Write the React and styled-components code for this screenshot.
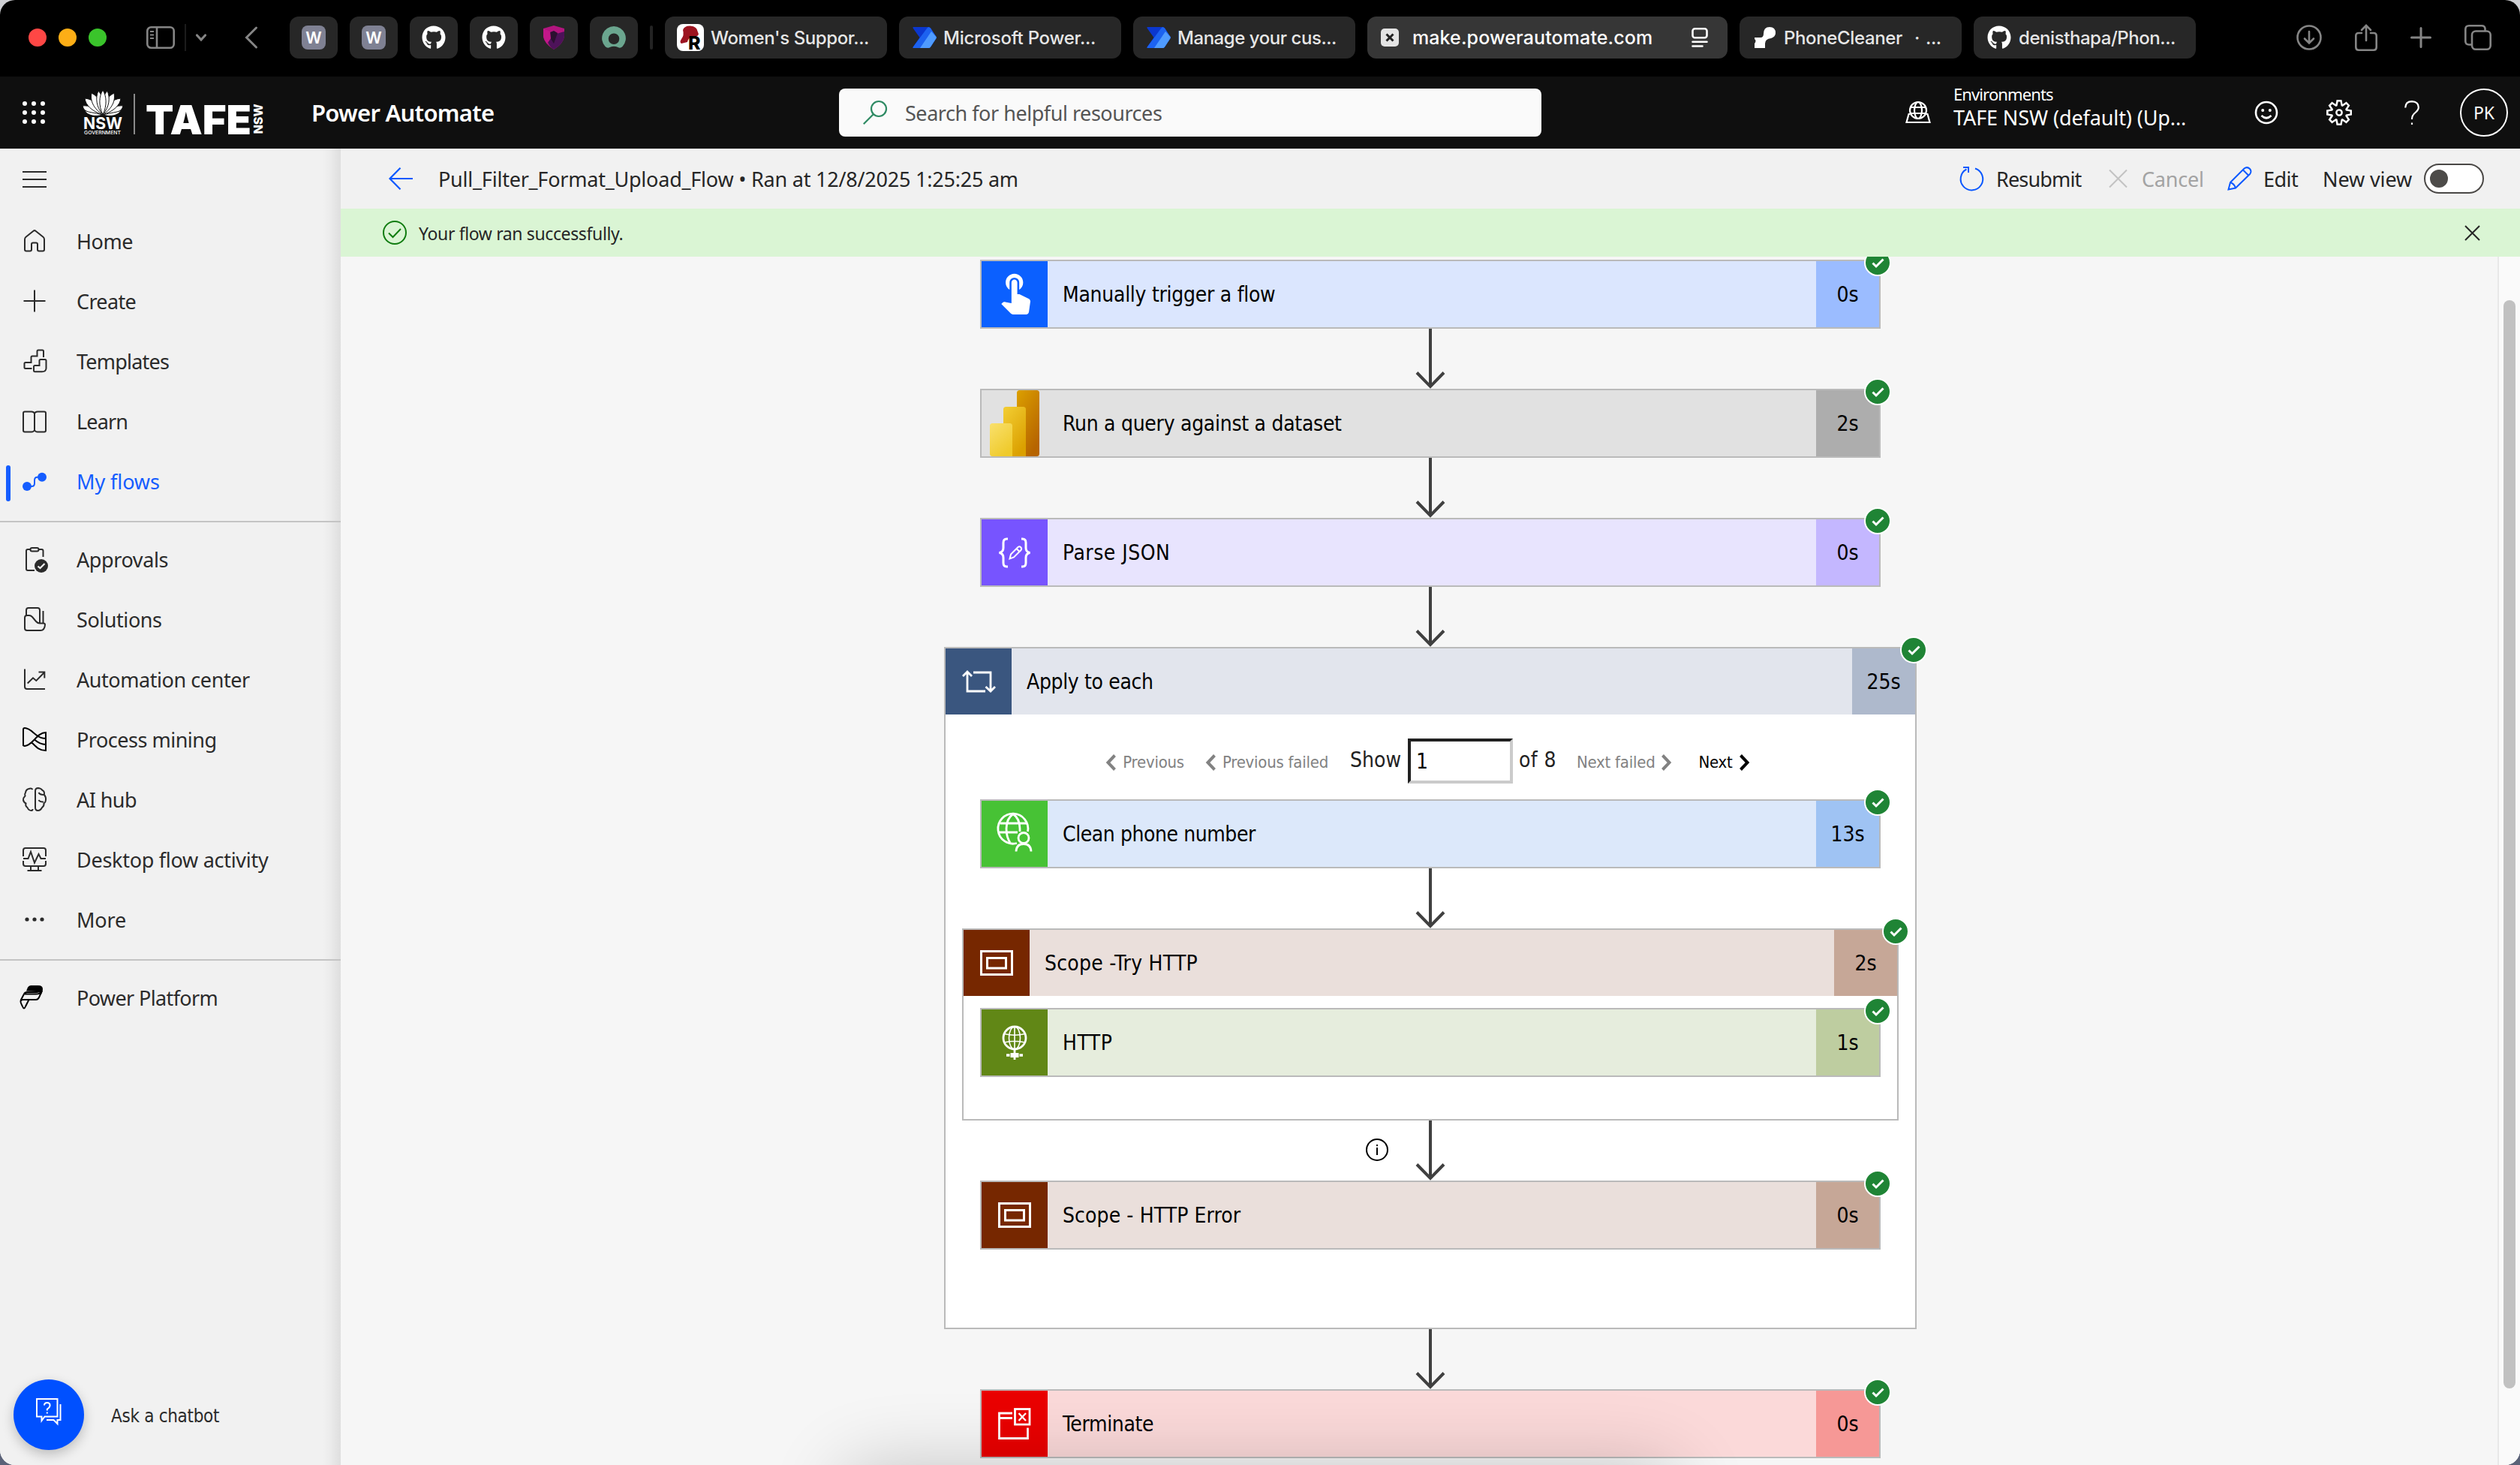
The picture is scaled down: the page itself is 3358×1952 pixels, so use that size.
import React from "react";
import styled, { createGlobalStyle, css } from "styled-components";
import { FaGithub } from "react-icons/fa";
import { MdTouchApp } from "react-icons/md";
import { VscSettingsGear } from "react-icons/vsc";

const UI = `"Noto Sans", "Open Sans", sans-serif`;
const TAHOMA = `"DejaVu Sans Condensed", "DejaVu Sans", sans-serif`;
const CHROME = `Inter, "Noto Sans", sans-serif`;

const GlobalStyle = createGlobalStyle`
  * { box-sizing: border-box; }
  body {
    margin: 0;
    background: linear-gradient(#cfd0d4 0 50%, #5b6278 50% 100%);
    font-family: ${UI};
  }
  svg { display: block; flex: none; }
`;

const Window = styled.div`
  position: relative;
  display: flex;
  flex-direction: column;
  width: 3358px;
  height: 1952px;
  overflow: hidden;
  border-radius: 20px;
  background: #f6f6f6;
`;

/* ---------- browser chrome ---------- */

const ChromeBar = styled.div`
  display: flex;
  align-items: center;
  height: 102px;
  padding: 0 38px 2px 38px;
  background: #000;
  font-family: ${CHROME};
`;

const Lights = styled.div`
  display: flex;
  gap: 16px;
`;

const Light = styled.span`
  width: 24px;
  height: 24px;
  border-radius: 50%;
  background: ${(p) => p.$color};
`;

const ChromeTools = styled.div`
  display: flex;
  align-items: center;
  margin-left: 53px;
  color: #858585;
`;

const ToolDivider = styled.span`
  width: 2px;
  height: 36px;
  margin: 0 12px 0 13px;
  background: #1c1c1c;
`;

const BackSlot = styled.span`
  margin-left: 50px;
`;

const Tabs = styled.div`
  display: flex;
  align-items: center;
  gap: 16px;
  margin-left: 42px;
`;

const PinnedTab = styled.div`
  display: flex;
  align-items: center;
  justify-content: center;
  width: 64px;
  height: 56px;
  border-radius: 12px;
  background: #272727;
  color: #fff;
`;

const TabsDivider = styled.span`
  width: 4px;
  height: 32px;
  border-radius: 2px;
  background: #232323;
`;

const Tab = styled.div`
  display: flex;
  align-items: center;
  gap: ${(p) => p.$gap || 9}px;
  width: ${(p) => (p.$active ? 480 : 296)}px;
  height: 56px;
  padding: 0 ${(p) => (p.$active ? 26 : 12)}px 0 ${(p) => p.$pad || 18}px;
  border-radius: 12px;
  background: ${(p) => (p.$active ? "#363636" : "#272727")};
  color: #fff;
`;

const TabTitle = styled.span`
  flex: 1;
  font-size: ${(p) => (p.$active ? 25 : 24)}px;
  font-weight: 500;
  letter-spacing: ${(p) => p.$ls}px;
  word-spacing: ${(p) => p.$ws || 0}px;
  white-space: pre;
  color: ${(p) => (p.$active ? "#fff" : "#e6e6e6")};
`;

const LetterBadge = styled.span`
  display: flex;
  align-items: center;
  justify-content: center;
  width: 32px;
  height: 32px;
  border-radius: 8px;
  background: #7f8193;
  color: #fff;
  font-size: 21px;
  font-weight: 600;
`;

const ChromeActions = styled.div`
  display: flex;
  align-items: center;
  gap: 44px;
  margin-left: auto;
  color: #858585;
`;

/* ---------- app header ---------- */

const Header = styled.header`
  display: flex;
  align-items: center;
  height: 96px;
  background: #0f0f0f;
  color: #fff;
`;

const HeaderLeft = styled.div`
  display: flex;
  align-items: center;
  width: 1118px;
  padding-left: 30px;
`;

const Brand = styled.div`
  margin-left: 50px;
`;

const AppName = styled.span`
  margin-left: 65px;
  font-size: 31px;
  font-weight: 600;
  letter-spacing: -0.75px;
  white-space: nowrap;
`;

const SearchBox = styled.div`
  display: flex;
  align-items: center;
  gap: 24px;
  width: 936px;
  height: 64px;
  padding-left: 32px;
  border-radius: 8px;
  background: #fafafa;
  color: #2e8a63;
`;

const SearchText = styled.span`
  font-size: 27px;
  letter-spacing: -0.46px;
  color: #555;
`;

const HeaderRight = styled.div`
  display: flex;
  align-items: center;
  flex: 1;
  justify-content: flex-end;
  padding-right: 16px;
`;

const EnvText = styled.div`
  display: flex;
  flex-direction: column;
  align-self: flex-start;
  width: 401px;
  margin: -8px 0 0 30px;
  white-space: nowrap;
`;

const EnvLabel = styled.span`
  font-size: 22px;
  line-height: 31px;
  letter-spacing: -0.89px;
`;

const EnvName = styled.span`
  font-size: 27px;
  line-height: 32px;
  letter-spacing: -0.11px;
`;

const HeaderIcons = styled.div`
  display: flex;
  align-items: center;
  gap: 64px;
`;

const HelpMark = styled.span`
  width: 32px;
  display: flex;
  justify-content: center;
`;

const Avatar = styled.div`
  display: flex;
  align-items: center;
  justify-content: center;
  width: 64px;
  height: 64px;
  margin-left: 48px;
  border: 2px solid #fff;
  border-radius: 50%;
  font-size: 23px;
`;

/* ---------- sidebar ---------- */

const Body = styled.div`
  display: flex;
  flex: 1;
  min-height: 0;
`;

const Sidebar = styled.nav`
  display: flex;
  flex-direction: column;
  flex: none;
  width: 454px;
  background: linear-gradient(90deg, rgba(0, 0, 0, 0) 430px, rgba(0, 0, 0, 0.025) 440px, rgba(0, 0, 0, 0.08) 454px), #f1f1f1;
  color: #2b2b2b;
`;

const MenuButton = styled.div`
  height: 83px;
  padding: 30px 0 0 30px;
`;

const NavItem = styled.div`
  position: relative;
  display: flex;
  align-items: center;
  gap: 40px;
  height: 80px;
  padding-left: 30px;
  color: ${(p) => (p.$selected ? "#155dff" : "inherit")};

  ${(p) =>
    p.$selected &&
    css`
      &::before {
        content: "";
        position: absolute;
        left: 8px;
        top: 19px;
        width: 6px;
        height: 48px;
        border-radius: 3px;
        background: #155dff;
      }
    `}
`;

const NavLabel = styled.span`
  font-size: 27px;
  letter-spacing: ${(p) => p.$ls}px;
  white-space: nowrap;
`;

const NavDivider = styled.hr`
  width: 100%;
  height: 2px;
  margin: 13px 0 9px;
  border: 0;
  background: #c4c4c4;
`;

const Chatbot = styled.div`
  display: flex;
  align-items: center;
  gap: 36px;
  margin-top: auto;
  padding: 0 0 20px 18px;
`;

const ChatButton = styled.div`
  display: flex;
  justify-content: center;
  width: 94px;
  height: 94px;
  padding-top: 25px;
  border-radius: 50%;
  background: #0050ff;
  box-shadow: 0 6px 16px rgba(0, 0, 0, 0.22);
`;

const ChatLabel = styled.span`
  padding-top: 3px;
  font-family: ${TAHOMA};
  font-size: 24px;
  letter-spacing: -0.3px;
`;

/* ---------- main column ---------- */

const Main = styled.main`
  display: flex;
  flex-direction: column;
  flex: 1;
  min-width: 0;
`;

const Toolbar = styled.div`
  display: flex;
  align-items: center;
  height: 80px;
  padding: 0 48px 0 64px;
  background: #f1f1f1;
  color: #262626;
  font-size: 27px;
`;

const RunTitle = styled.span`
  flex: 1;
  margin-left: 34px;
  letter-spacing: -0.22px;
  white-space: nowrap;
`;

const Command = styled.div`
  display: flex;
  align-items: center;
  gap: ${(p) => p.$gap}px;
  width: ${(p) => p.$width}px;
  letter-spacing: ${(p) => p.$ls}px;
  color: ${(p) => (p.$disabled ? "#a3a3a3" : "inherit")};
  white-space: nowrap;

  svg { color: ${(p) => (p.$disabled ? "#c2c2c2" : "#0a58ff")}; }
`;

const Toggle = styled.span`
  display: flex;
  align-items: center;
  width: 80px;
  height: 40px;
  padding-left: 6px;
  border: 2px solid #4a4846;
  border-radius: 20px;
  background: #fff;

  &::before {
    content: "";
    width: 24px;
    height: 24px;
    border-radius: 50%;
    background: #4d4b49;
  }
`;

const SuccessBar = styled.div`
  display: flex;
  align-items: center;
  height: 64px;
  padding: 0 53px 0 56px;
  background: #daf5d4;
  color: #262626;
`;

const SuccessText = styled.span`
  flex: 1;
  margin-left: 16px;
  padding-top: 2px;
  font-size: 23px;
  letter-spacing: -0.37px;
`;

const Canvas = styled.div`
  position: relative;
  display: flex;
  flex-direction: column;
  align-items: center;
  flex: 1;
  min-height: 0;
  padding-top: 4px;
  overflow: hidden;
  background: #f6f6f6;
  font-family: ${TAHOMA};
`;

const ScrollTrack = styled.div`
  position: absolute;
  top: 0;
  right: 0;
  bottom: 0;
  width: 30px;
  padding: 58px 0 0 6px;
  border-left: 2px solid #e8e8e8;
  background: #fafafa;
`;

const ScrollThumb = styled.div`
  width: 16px;
  height: 1450px;
  border-radius: 8px;
  background: #c1c1c1;
`;

const DockShadow = styled.div`
  position: absolute;
  left: 1130px;
  top: 1962px;
  width: 1098px;
  height: 120px;
  border-radius: 30px;
  box-shadow: 0 0 100px 8px rgba(0, 0, 0, 0.2);
`;

/* ---------- flow cards ---------- */

const Card = styled.section`
  position: relative;
  display: flex;
  flex: none;
  width: 1200px;
  height: 92px;
  border: 2px solid #bababa;
  background: ${(p) => p.$bg};
`;

const Container = styled.section`
  position: relative;
  display: flex;
  flex-direction: column;
  align-items: center;
  flex: none;
  width: ${(p) => p.$width}px;
  padding-bottom: ${(p) => p.$bottom}px;
  border: 2px solid #bababa;
  background: #fff;
`;

const ContainerHeader = styled.div`
  display: flex;
  align-self: stretch;
  height: 88px;
  margin-bottom: ${(p) => p.$after || 0}px;
  background: ${(p) => p.$bg};
`;

const CardIcon = styled.div`
  flex: none;
  width: 88px;
  height: 88px;
  background: ${(p) => p.$color};
`;

const CardTitle = styled.div`
  display: flex;
  align-items: center;
  flex: 1;
  padding-left: 20px;
  color: #000;
  font-size: 28px;
  letter-spacing: ${(p) => p.$ls}px;
  white-space: nowrap;
`;

const Duration = styled.div`
  display: flex;
  align-items: center;
  justify-content: center;
  width: 84px;
  background: ${(p) => p.$color};
  color: #000;
  font-size: 28px;
`;

const StatusBadge = styled.span`
  position: absolute;
  top: -16px;
  right: -16px;
  width: 36px;
  height: 36px;
  border: 2px solid #fff;
  border-radius: 50%;
  background: #1f8435;
`;

const ArrowSlot = styled.div`
  position: relative;
  display: flex;
  justify-content: center;
  flex: none;
  width: 40px;
  height: 80px;
`;

const InfoMark = styled.span`
  position: absolute;
  left: -66px;
  top: 24px;
`;

/* ---------- pager ---------- */

const Pager = styled.div`
  display: flex;
  align-items: center;
  align-self: stretch;
  height: 113px;
  padding-bottom: 11px;
  padding-top: 22px;
`;

const PagerLeft = styled.div`
  display: flex;
  align-items: center;
  justify-content: flex-end;
  width: 616px;
  padding-right: 9px;
`;

const PagerLink = styled.span`
  display: flex;
  align-items: center;
  gap: 9px;
  margin-left: ${(p) => p.$ml || 0}px;
  margin-right: ${(p) => p.$mr || 0}px;
  padding-top: 3px;
  font-size: 22px;
  letter-spacing: -0.24px;
  white-space: nowrap;
  color: ${(p) => (p.$on ? "#000" : "#828282")};
`;

const PagerText = styled.span`
  padding-bottom: 3px;
  font-size: 28px;
  letter-spacing: ${(p) => p.$ls || 0}px;
  color: #222;
`;

const PagerInput = styled.div`
  display: flex;
  align-items: center;
  width: 140px;
  height: 60px;
  padding-left: 7px;
  border: 4px solid;
  border-color: #212121 #cbcbcb #cbcbcb #212121;
  background: #fff;
  font-size: 28px;
  color: #000;
`;

const PagerRight = styled.div`
  display: flex;
  align-items: center;
  padding-left: 8px;
`;

/* ---------- drawings ---------- */

const Stroke = ({ w = 32, h = 32, sw = 2, children, ...rest }) => (
  <svg width={w} height={h} viewBox={`0 0 ${w} ${h}`} fill="none" stroke="currentColor" strokeWidth={sw} overflow="visible" {...rest}>
    {children}
  </svg>
);

const GovLogo = () => (
  <svg width="240" height="60" viewBox="0 0 240 60" fill="#fff" overflow="visible">
    <g stroke="#0f0f0f" strokeWidth="1">
      <path d="M27 34 C12 34 2 30 0 21 C8 20 20 24 27 34Z" />
      <path d="M27 34 C42 34 52 30 54 21 C46 20 34 24 27 34Z" />
      <path d="M27 33 C12 28 4 20 3 11 C14 12 24 20 27 33Z" />
      <path d="M27 33 C42 28 50 20 51 11 C40 12 30 20 27 33Z" />
      <path d="M27 33 C14 24 10 14 12 4 C22 9 28 20 27 33Z" />
      <path d="M27 33 C40 24 44 14 42 4 C32 9 26 20 27 33Z" />
      <path d="M27 33 C18 22 17 10 21 1 C28 9 30 20 27 33Z" />
      <path d="M27 33 C36 22 37 10 33 1 C26 9 24 20 27 33Z" />
      <path d="M27 33 C21 20 22 8 27 0 C32 8 33 20 27 33Z" />
      <path d="M27 33 C16 30 8 30 3 27 C6 34 16 36 27 33 C38 36 48 34 51 27 C46 30 38 30 27 33Z" />
    </g>
    <text x="1" y="51.500" fontFamily="Inter, sans-serif" fontWeight="700" fontSize="21" textLength="52" lengthAdjust="spacingAndGlyphs">NSW</text>
    <text x="2" y="58.500" fontFamily="Inter, sans-serif" fontWeight="500" fontSize="6.500" textLength="49" lengthAdjust="spacingAndGlyphs">GOVERNMENT</text>
    <rect x="68" y="5" width="2" height="54" fill="#8a8a8a" />
    <text x="84" y="58.500" fontFamily="Inter, sans-serif" fontWeight="900" fontSize="54" textLength="141" lengthAdjust="spacingAndGlyphs">TAFE</text>
    <text transform="translate(239.500 58.500) rotate(-90)" fontFamily="Inter, sans-serif" fontWeight="800" fontSize="16.500" textLength="40" lengthAdjust="spacingAndGlyphs">NSW</text>
  </svg>
);

const Waffle = () => (
  <svg width="30" height="30" fill="#fff">
    {[3, 15, 27].map((y) => [3, 15, 27].map((x) => <circle key={`${x}-${y}`} cx={x} cy={y} r="3" />))}
  </svg>
);

const PowerAutomateMark = () => (
  <svg width="32" height="28" viewBox="0 0 32 28">
    <path d="M1 0 H21 Q23 0 24 1.500 L31.500 13 Q32 14 31.500 15 L24 26.500 Q23 28 21 28 H1 Q0 28 .8 26.500 L9.500 14 L.6 1.500 Q0 0 1 0Z" fill="#0b37cf" />
    <path d="M21 0 Q23 0 24 1.500 L31.500 13 Q32 14 31.500 15 L24 26.500 Q23 28 21 28 H1 Q0 28 .8 26.500 L19 2Z" fill="#1c62f0" />
    <path d="M31.500 13 Q32 14 31.500 15 L24 26.500 Q23 28 21 28 H10 L25 6Z" fill="#4f9bff" />
  </svg>
);

const GITHUB = <FaGithub size={32} />;

const Shield = () => (
  <svg width="28" height="32" viewBox="0 0 28 32">
    <path d="M14 0 L28 4 V14 Q27 24 14 32 Q1 24 0 14 V4Z" fill="#b3157f" />
    <path d="M14 12 L28 8 V14 Q27 24 14 32 Q8 28 6 22Z" fill="#4d1259" />
    <path d="M14 7 L19 10 L14 24 L8 15 L9 9Z" fill="#2b1030" />
    <path d="M9 8 L0 4 V14 Q.5 19 5 24 L10 17Z" fill="#c2188a" />
  </svg>
);

const Ring = () => (
  <svg width="32" height="30" viewBox="0 0 32 30">
    <path d="M16 0 A16 16 0 0 0 4.500 27 Q7.500 30 10.500 28 Q16 25.500 21.500 28 Q24.500 30 27.500 27 A16 16 0 0 0 16 0Z M16 9.500 A7.200 7.200 0 1 1 16 24 A7.200 7.200 0 1 1 16 9.500Z" fill="#6ba68f" fillRule="evenodd" />
  </svg>
);

const RoundedPortrait = () => (
  <svg width="36" height="36" viewBox="0 0 36 36" overflow="visible">
    <rect width="36" height="36" rx="8" fill="#fff" />
    <path d="M8 8 Q10 2 18 2.500 Q27 3 28 11 Q30 14 27 16 L20 16 Q15 19 14 24 L6 26 Q3 24 6 20 Q10 15 8 8Z" fill="#9c1420" />
    <text x="15" y="34" fontFamily="Inter, sans-serif" fontWeight="800" fontSize="25" fill="#000">R</text>
  </svg>
);

const PhoneMark = () => (
  <svg width="28" height="28" viewBox="0 0 28 28" fill="#fff">
    <path d="M0 14 H8 Q12 14 12 9 Q12 0 20 0 Q28 0 28 8 Q28 13 22 15 Q14 16 14 22 V28 H0 V22Q3 18 0 16Z" />
  </svg>
);

const SoloX = () => (
  <svg width="24" height="24" viewBox="0 0 24 24">
    <rect width="24" height="24" rx="5" fill="#e4e4e4" />
    <path d="M7.500 7.500 L16.500 16.500 M16.500 7.500 L7.500 16.500" stroke="#222" strokeWidth="3" />
  </svg>
);

const Check = () => (
  <svg width="32" height="32" viewBox="0 0 32 32" fill="none" stroke="#fff" strokeWidth="3">
    <path d="M9.500 16.500 L14 21 L23.500 11.500" />
  </svg>
);

const Arrow = () => (
  <svg width="40" height="80" viewBox="0 0 40 80" fill="none" stroke="#404040" strokeWidth="4">
    <path d="M20 0 V77" />
    <path d="M2 58.500 L20 77 L38 58.500" />
  </svg>
);

const Info = () => (
  <svg width="30" height="30" viewBox="0 0 30 30">
    <circle cx="15" cy="15" r="14" fill="none" stroke="#000" strokeWidth="2" />
    <rect x="14" y="12" width="2" height="10" />
    <rect x="14" y="8" width="2" height="2.200" />
  </svg>
);

const Chevron = ({ right }) => (
  <Stroke w={13} h={22} sw={4}>
    <path d={right ? "M1.500 1.500 L10.500 11 L1.500 20.500" : "M11.500 1.500 L2.500 11 L11.500 20.500"} />
  </Stroke>
);

const navIcons = {
  home: (
    <path d="M3 14 Q3 12 4.500 10.800 L14.500 2.800 Q16 1.500 17.500 2.800 L27.500 10.800 Q29 12 29 14 V27.500 Q29 29.500 27 29.500 H22 Q20 29.500 20 27.500 V20.500 Q20 18.500 18 18.500 H14 Q12 18.500 12 20.500 V27.500 Q12 29.500 10 29.500 H5 Q3 29.500 3 27.500Z" />
  ),
  create: <path d="M16 1.500 V30.500 M1.500 16 H30.500" />,
  templates: (
    <>
      <path d="M28 11 V3 Q28 1.500 26.500 1.500 H21 Q19.500 1.500 19.500 3 V9.500 H13 Q11.500 9.500 11.500 11 V18 H4 Q2.500 18 2.500 19.500 V24.500 Q2.500 26 4 26 H12.500" />
      <path d="M24 14 H30 Q31.500 14 31.500 15.500 V26 Q31 30.300 26 30.300 H16.500 Q15 30.300 15 29 V23.500 Q15 22 16.500 22 H22.500 V15.500 Q22.500 14 24 14Z" />
    </>
  ),
  learn: (
    <path d="M16 6 Q15 3.500 12 3.500 H3 Q1 3.500 1 5.500 V28.500 Q1 30.500 3 30.500 H12 Q15 30.500 16 28 Q17 30.500 20 30.500 H29 Q31 30.500 31 28.500 V5.500 Q31 3.500 29 3.500 H20 Q17 3.500 16 6 V28" />
  ),
  flows: (
    <>
      <circle cx="6" cy="23" r="6" fill="currentColor" stroke="none" />
      <circle cx="26" cy="10.700" r="6" fill="currentColor" stroke="none" />
      <path d="M8 23 H12.500 Q16 23 16 19 V15 Q16 10.700 20 10.700 H23" />
    </>
  ),
  approvals: (
    <>
      <path d="M10 3 H7 Q5 3 5 5 V29 Q5 31 7 31 H16 M22 3 H25.500 Q27.500 3 27.500 5 V13" />
      <rect x="10.500" y="1" width="11" height="4.500" rx="2.200" />
      <circle cx="25" cy="25" r="9" fill="currentColor" stroke="none" />
      <path d="M20.500 25.500 L23.500 28 L29.500 22" stroke="#f1f1f1" strokeWidth="2.200" />
    </>
  ),
  solutions: (
    <>
      <path d="M5 11 V4 Q5 1 8 1 H20 Q23 1 23 4 V21 M27.500 5 V21" />
      <path d="M3 14 Q3 11 6 11 H9 Q11 11 13 13 L18 19 Q20 21.500 23 21.500 H28 Q30 21.500 30 23.500 Q29.500 31 24 31 H6 Q3 31 3 28Z" />
    </>
  ),
  automation: (
    <>
      <path d="M3 2.500 V26 Q3 29 6 29 H30" />
      <path d="M6.700 21.500 L14 14.300 L18.300 17.900 L29 7 M21.500 6.500 H29.300 V14.500" />
    </>
  ),
  mining: (
    <g stroke="#000">
      <path d="M1 25 V3 Q1 1 3 1 C12 1 17 13 27 14.500 L31 15 M1 23 Q1 25 3 25 C14 24 19 7 31 7 V31 C22 31 18 26 12.500 20.500" />
      <path d="M16 16.500 C20 20 25 23 31 23" />
    </g>
  ),
  hub: (
    <>
      <path d="M13.500 3 Q12 .8 8.500 2 Q4.500 3 4 7 Q2.500 9 3.500 11.500 Q.8 14 1 17 Q1.500 20 4.500 21.500 Q3.500 25 6.500 27 Q8 31 12 31 Q13.500 31 13.500 29" />
      <path d="M17 5 Q17 1 21 1 Q25 1.500 26.500 4 Q29.500 5 29 10 Q31.500 13 31 17 Q31 19.500 28.500 21.500 Q29 25 26 27 Q24 31 20.500 31 Q17 31 17 27Z M21.500 7 Q23 10 28 10 M21.500 17 Q23 19.500 28 19.500" />
    </>
  ),
  desktop: (
    <>
      <path d="M1 12 V4 Q1 1 4 1 H28 Q31 1 31 4 V12 M1 18 V22 Q1 25 4 25 H28 Q31 25 31 22 V18 M11 25 V31 M21 25 V31 M6.500 31 H25.500" />
      <path d="M1 15 H7.500 L11 6 L16 20.500 L21.500 9 L24.500 15 H31" />
    </>
  ),
  more: (
    <g fill="currentColor" stroke="none">
      <circle cx="6" cy="16" r="2.600" />
      <circle cx="16" cy="16" r="2.600" />
      <circle cx="26" cy="16" r="2.600" />
    </g>
  ),
  platform: (
    <g stroke="#000">
      <path d="M5 7.500 L7 2.500 Q8.500 0 11 0 H21 Q27 0 27 5 Q27 8 25 12 Q24 8 19 8Z" fill="#000" stroke="none" />
      <path d="M-2.500 20 L2 11.500 Q3 9 6 9 H19 Q25 8 26 7 L22 16 Q20.500 19 18 19 H1 Q-2 19 -2.500 21 Q-3 22 0 28 Q2 33 4 28 L8.500 19 M3 11.500 H18 Q23 11.500 25 9" />
    </g>
  ),
};

const primaryNav = [
  ["home", "Home", -0.43],
  ["create", "Create", -0.66],
  ["templates", "Templates", -0.8],
  ["learn", "Learn", -0.85],
  ["flows", "My flows", -0.08],
];
const secondaryNav = [
  ["approvals", "Approvals", -0.4],
  ["solutions", "Solutions", -0.44],
  ["automation", "Automation center", -0.44],
  ["mining", "Process mining", -0.49],
  ["hub", "AI hub", -0.56],
  ["desktop", "Desktop flow activity", -0.28],
  ["more", "More", -0.14],
];
const platformNav = [["platform", "Power Platform", -0.63]];

const NavList = ({ items }) =>
  items.map(([icon, label, ls]) => (
    <NavItem key={label} $selected={icon === "flows"}>
      <Stroke>{navIcons[icon]}</Stroke>
      <NavLabel $ls={ls}>{label}</NavLabel>
    </NavItem>
  ));

const Glyph = ({ children, sw = 2.8 }) => (
  <svg width="88" height="88" viewBox="0 0 88 88" fill="none" stroke="#fff" strokeWidth={sw}>
    {children}
  </svg>
);

const TouchGlyph = styled(MdTouchApp)`
  width: 62px;
  height: 62px;
  margin: 9px 0 0 14px;
  fill: #fff;
`;

const glyphs = {
  touch: <TouchGlyph />,
  powerbi: (
    <svg width="88" height="88" viewBox="0 0 88 88">
      <defs>
        <linearGradient id="bar3" x1="0" y1="0" x2=".6" y2="1">
          <stop offset="0" stopColor="#dca000" />
          <stop offset="1" stopColor="#b66400" />
        </linearGradient>
        <linearGradient id="bar2" x1="0" y1="0" x2=".6" y2="1">
          <stop offset="0" stopColor="#f3ce34" />
          <stop offset="1" stopColor="#dba000" />
        </linearGradient>
        <linearGradient id="bar1" x1="0" y1="0" x2=".6" y2="1">
          <stop offset="0" stopColor="#f9e06c" />
          <stop offset="1" stopColor="#efca2b" />
        </linearGradient>
      </defs>
      <rect x="47" y="0" width="30" height="88" rx="3.500" fill="url(#bar3)" />
      <path d="M29 25.500 Q29 22 32.500 22 H55.500 Q59 22 59 25.500 V88 H29Z" fill="url(#bar2)" />
      <path d="M11 47.500 Q11 44 14.500 44 H37.500 Q41 44 41 47.500 V88 H14.500 Q11 88 11 84.500Z" fill="url(#bar1)" />
    </svg>
  ),
  json: (
    <Glyph sw={3}>
      <path d="M35 26 H33.500 Q29 26 29 31 V38 Q29 43.500 23.500 44.500 Q29 45.500 29 51 V58 Q29 63 33.500 63 H35" />
      <path d="M53 26 H54.500 Q59 26 59 31 V38 Q59 43.500 64.500 44.500 Q59 45.500 59 51 V58 Q59 63 54.500 63 H53" />
      <path d="M37.500 52.500 L39 46.500 L48.500 37 Q50.500 35.500 52.300 37.200 Q54 39 52.500 41 L43 50.500Z M46.500 39 L50.500 43" strokeWidth="2" />
    </Glyph>
  ),
  loop: (
    <Glyph>
      <path d="M29 32 V57 H53 M23 37 L29 31 L35 37" />
      <path d="M37 32 H60 V56 M53.500 51 L60 57 L66 51" />
    </Glyph>
  ),
  connector: (
    <Glyph>
      <path d="M47 56.500 A20 20 0 1 1 61.500 41" />
      <path d="M38 56 Q33 48 33 37 Q33 24 42 17.500 Q51 24 51 37 V41 M24.500 30 H60 M23 42 H48" />
      <circle cx="56" cy="49.500" r="7" />
      <path d="M46 67.500 Q46.500 57.500 56 57.500 Q65.500 57.500 66 67.500" />
    </Glyph>
  ),
  http: (
    <Glyph>
      <circle cx="44" cy="38" r="15" />
      <path d="M44 23 V53 M30 32.500 Q44 36 58 32.500 M30 44 Q44 40.500 58 44" strokeWidth="1.600" />
      <ellipse cx="44" cy="38" rx="7.500" ry="15" strokeWidth="1.600" />
      <path d="M44 53 V67" />
      <path d="M33 61 H37.500 M50.500 61 H55" strokeWidth="3.500" />
      <path d="M38.500 61 H49.500" strokeWidth="6" />
    </Glyph>
  ),
  scope: (
    <Glyph sw={3}>
      <rect x="23.500" y="28.500" width="41" height="31" />
      <rect x="31.500" y="37.500" width="25" height="13.500" />
    </Glyph>
  ),
  terminate: (
    <Glyph>
      <path d="M41 30 H23.500 V63.500 H61.500 V49.500 M23.500 36.500 H41" />
      <rect x="44.500" y="24.500" width="19.500" height="20.500" />
      <path d="M49.500 30 L59 40 M59 30 L49.500 40" strokeWidth="2.400" />
    </Glyph>
  ),
};

const StepParts = ({ icon, color, title, ls, time, shade }) => (
  <>
    <CardIcon $color={color}>{glyphs[icon]}</CardIcon>
    <CardTitle $ls={ls}>{title}</CardTitle>
    <Duration $color={shade}>{time}</Duration>
  </>
);

const Badge = () => (
  <StatusBadge>
    <Check />
  </StatusBadge>
);

const Step = (props) => (
  <Card $bg={props.bg}>
    <StepParts {...props} />
    <Badge />
  </Card>
);

const Connector = ({ info }) => (
  <ArrowSlot>
    {info && (
      <InfoMark>
        <Info />
      </InfoMark>
    )}
    <Arrow />
  </ArrowSlot>
);

const steps = {
  trigger: { icon: "touch", color: "#0b60ff", bg: "#dbe6fe", shade: "#9bbcff", title: "Manually trigger a flow", ls: -0.28, time: "0s" },
  query: { icon: "powerbi", color: "#e1e1e1", bg: "#e1e1e1", shade: "#adadad", title: "Run a query against a dataset", ls: -0.28, time: "2s" },
  parse: { icon: "json", color: "#7754ff", bg: "#e8e4fe", shade: "#c4b7ff", title: "Parse JSON", ls: 0.5, time: "0s" },
  each: { icon: "loop", color: "#3a567f", bg: "#e2e5ed", shade: "#aeb9cc", title: "Apply to each", ls: -0.35, time: "25s" },
  clean: { icon: "connector", color: "#47c235", bg: "#dce8fa", shade: "#9fc3f3", title: "Clean phone number", ls: -0.43, time: "13s" },
  tryHttp: { icon: "scope", color: "#762700", bg: "#eadfdb", shade: "#c6a797", title: "Scope -Try HTTP", ls: 0.25, time: "2s" },
  http: { icon: "http", color: "#618716", bg: "#e6eddd", shade: "#becda0", title: "HTTP", ls: 0.5, time: "1s" },
  error: { icon: "scope", color: "#762700", bg: "#eadfdb", shade: "#c6a797", title: "Scope - HTTP Error", ls: 0.1, time: "0s" },
  terminate: { icon: "terminate", color: "#ea0000", bg: "#fbd9d9", shade: "#f69896", title: "Terminate", ls: -0.35, time: "0s" },
};

const BrowserChrome = () => (
  <ChromeBar>
    <Lights>
      <Light $color="#fe4745" />
      <Light $color="#fdae16" />
      <Light $color="#3ac42b" />
    </Lights>
    <ChromeTools>
      <Stroke w={38} h={30} sw={2.6}>
        <rect x="1.300" y="1.300" width="35.400" height="27.400" rx="5" />
        <path d="M14 1.300 V28.700" />
        <path d="M5 7 H10 M5 11.500 H10 M5 16 H10" strokeWidth="2" />
      </Stroke>
      <ToolDivider />
      <Stroke w={16} h={10} sw={3.2} strokeLinecap="round">
        <path d="M2.500 2 L8 8 L13.500 2" />
      </Stroke>
      <BackSlot>
        <Stroke w={18} h={30} sw={3} strokeLinecap="round">
          <path d="M15.500 2 L2.500 15 L15.500 28" />
        </Stroke>
      </BackSlot>
    </ChromeTools>
    <Tabs>
      <PinnedTab><LetterBadge>W</LetterBadge></PinnedTab>
      <PinnedTab><LetterBadge>W</LetterBadge></PinnedTab>
      <PinnedTab>{GITHUB}</PinnedTab>
      <PinnedTab>{GITHUB}</PinnedTab>
      <PinnedTab><Shield /></PinnedTab>
      <PinnedTab><Ring /></PinnedTab>
      <TabsDivider />
      <Tab $pad={16}>
        <RoundedPortrait />
        <TabTitle $ls={-0.39}>Women's Suppor...</TabTitle>
      </Tab>
      <Tab>
        <PowerAutomateMark />
        <TabTitle $ls={-0.27}>Microsoft Power...</TabTitle>
      </Tab>
      <Tab>
        <PowerAutomateMark />
        <TabTitle $ls={-0.45}>Manage your cus...</TabTitle>
      </Tab>
      <Tab $active $gap={18}>
        <SoloX />
        <TabTitle $active $ls={0.1}>make.powerautomate.com</TabTitle>
        <Stroke w={22} h={26} sw={2.6} strokeLinecap="round">
          <rect x="1.500" y="1.300" width="19" height="12" rx="3" />
          <path d="M1.500 18.700 H20.500 M1.500 24.500 H14.500" />
        </Stroke>
      </Tab>
      <Tab $pad={20} $gap={11}>
        <PhoneMark />
        <TabTitle $ls={-0.36} $ws={2}>{"PhoneCleaner  · ..."}</TabTitle>
      </Tab>
      <Tab $gap={10}>
        {GITHUB}
        <TabTitle $ls={-0.44}>denisthapa/Phon...</TabTitle>
      </Tab>
    </Tabs>
    <ChromeActions>
      <Stroke w={34} h={34} sw={2.6} strokeLinecap="round">
        <circle cx="17" cy="17" r="15.500" />
        <path d="M17 9 V24 M11 18.500 L17 24.500 L23 18.500" />
      </Stroke>
      <Stroke w={30} h={36} sw={2.6} strokeLinecap="round">
        <path d="M9 12 H5 Q1.300 12 1.300 15.500 V31 Q1.300 34.700 5 34.700 H25 Q28.700 34.700 28.700 31 V15.500 Q28.700 12 25 12 H21" />
        <path d="M15 22 V2 M9 8 L15 1.800 L21 8" />
      </Stroke>
      <Stroke w={28} h={28} sw={3} strokeLinecap="round">
        <path d="M14 1.500 V26.500 M1.500 14 H26.500" />
      </Stroke>
      <Stroke w={36} h={34} sw={2.6}>
        <rect x="10" y="8.500" width="24.700" height="24.200" rx="5" />
        <path d="M9.500 26.500 H6 Q1.300 26.500 1.300 22 V6 Q1.300 1.300 6 1.300 H23 Q27 1.300 27.500 5 V8" />
      </Stroke>
    </ChromeActions>
  </ChromeBar>
);

const AppHeader = () => (
  <Header>
    <HeaderLeft>
      <Waffle />
      <Brand>
        <GovLogo />
      </Brand>
      <AppName>Power Automate</AppName>
    </HeaderLeft>
    <SearchBox>
      <Stroke sw={2.2}>
        <circle cx="21" cy="11" r="10" />
        <path d="M14 18 L.8 31.200" />
      </Stroke>
      <SearchText>Search for helpful resources</SearchText>
    </SearchBox>
    <HeaderRight>
      <Stroke w={34} h={32} sw={2.2}>
        <circle cx="17" cy="13" r="11" />
        <ellipse cx="17" cy="13" rx="5" ry="11" />
        <path d="M7 9 H27 M7 17 H27 M6 18 H4.500 L1.500 29 H32.500 L29.500 18 H28" />
      </Stroke>
      <EnvText>
        <EnvLabel>Environments</EnvLabel>
        <EnvName>TAFE NSW (default) (Up...</EnvName>
      </EnvText>
      <HeaderIcons>
        <Stroke sw={2.6}>
          <circle cx="16" cy="16" r="14" />
          <circle cx="11.200" cy="13" r="2" fill="currentColor" stroke="none" />
          <circle cx="20.800" cy="13" r="2" fill="currentColor" stroke="none" />
          <path d="M9.500 20 Q16 26.500 22.500 20" />
        </Stroke>
        <VscSettingsGear size={34} />
        <HelpMark>
          <Stroke w={20} h={32} sw={2.2}>
            <path d="M1.200 9.500 Q1.500 1.200 10 1.200 Q18.500 1.500 18.800 9 Q18.800 12.500 14.500 16 Q10 19.500 10 25" />
            <path d="M10 29.500 V32" />
          </Stroke>
        </HelpMark>
      </HeaderIcons>
      <Avatar>PK</Avatar>
    </HeaderRight>
  </Header>
);

const SideNav = () => (
  <Sidebar>
    <MenuButton>
      <Stroke w={32} h={22}>
        <path d="M0 1 H32 M0 11 H32 M0 21 H32" />
      </Stroke>
    </MenuButton>
    <NavList items={primaryNav} />
    <NavDivider />
    <NavList items={secondaryNav} />
    <NavDivider />
    <NavList items={platformNav} />
    <Chatbot>
      <ChatButton>
        <Stroke w={34} h={38} sw={2} color="#fff">
          <path d="M1 1 H28.500 V24.500 H11.500 L7.500 30 V24.500 H1Z" />
          <path d="M32.500 8 V29 H28.500 V34 L23.500 29 H14" />
          <path d="M11 9.500 Q11 6 14.800 6 Q18.600 6 18.600 9.500 Q18.600 12 14.800 14.500 V16.500 M14.800 18.500 V20.500" />
        </Stroke>
      </ChatButton>
      <ChatLabel>Ask a chatbot</ChatLabel>
    </Chatbot>
  </Sidebar>
);

const RunToolbar = () => (
  <Toolbar>
    <Stroke color="#0a58ff" sw={2.2}>
      <path d="M1.500 16 H32 M15.500 1.800 L1.500 16 L15.500 30.200" />
    </Stroke>
    <RunTitle>Pull_Filter_Format_Upload_Flow • Ran at 12/8/2025 1:25:25 am</RunTitle>
    <Command $width={198} $gap={15} $ls={-0.85}>
      <Stroke w={33} h={32}>
        <path d="M20 2.500 A14.800 14.800 0 1 1 8.500 3.500 M4 1 H11 V8" />
      </Stroke>
      Resubmit
    </Command>
    <Command $width={158} $gap={19} $ls={-0.22} $disabled>
      <Stroke w={25} h={24}>
        <path d="M1 .5 L24 23.500 M24 .5 L1 23.500" />
      </Stroke>
      Cancel
    </Command>
    <Command $width={127} $gap={15} $ls={-0.53}>
      <Stroke w={33} h={32}>
        <path d="M1.500 30.500 L4 21 L22.500 2.500 Q26.500 -.5 30 3 Q33 6.500 30 10 L11 28.500Z M4 21 Q9 22.500 11 28.500 M21 4.500 L28 11.500" />
      </Stroke>
      Edit
    </Command>
    <Command $width={135} $ls={-0.12}>New view</Command>
    <Toggle />
  </Toolbar>
);

const SuccessBanner = () => (
  <SuccessBar>
    <Stroke color="#107c10">
      <circle cx="16" cy="16" r="15" />
      <path d="M8 16.500 L13.500 22 L24 11" />
    </Stroke>
    <SuccessText>Your flow ran successfully.</SuccessText>
    <Stroke w={21} h={21}>
      <path d="M1 1 L20 20 M20 1 L1 20" />
    </Stroke>
  </SuccessBar>
);

const RunPager = () => (
  <Pager>
    <PagerLeft>
      <PagerLink $mr={29}>
        <Chevron />
        Previous
      </PagerLink>
      <PagerLink $mr={29}>
        <Chevron />
        Previous failed
      </PagerLink>
      <PagerText>Show</PagerText>
    </PagerLeft>
    <PagerInput>1</PagerInput>
    <PagerRight>
      <PagerText $ls={0.41}>of 8</PagerText>
      <PagerLink $ml={27} $mr={36}>
        Next failed
        <Chevron right />
      </PagerLink>
      <PagerLink $on>
        Next
        <Chevron right />
      </PagerLink>
    </PagerRight>
  </Pager>
);

export default function App() {
  return (
    <>
      <GlobalStyle />
      <Window>
        <BrowserChrome />
        <AppHeader />
        <Body>
          <SideNav />
          <Main>
            <RunToolbar />
            <SuccessBanner />
            <Canvas>
              <Step {...steps.trigger} />
              <Connector />
              <Step {...steps.query} />
              <Connector />
              <Step {...steps.parse} />
              <Connector />
              <Container $width={1296} $bottom={104}>
                <ContainerHeader $bg={steps.each.bg}>
                  <StepParts {...steps.each} />
                </ContainerHeader>
                <Badge />
                <RunPager />
                <Step {...steps.clean} />
                <Connector />
                <Container $width={1248} $bottom={56}>
                  <ContainerHeader $bg={steps.tryHttp.bg} $after={16}>
                    <StepParts {...steps.tryHttp} />
                  </ContainerHeader>
                  <Badge />
                  <Step {...steps.http} />
                </Container>
                <Connector info />
                <Step {...steps.error} />
              </Container>
              <Connector />
              <Step {...steps.terminate} />
              <ScrollTrack>
                <ScrollThumb />
              </ScrollTrack>
            </Canvas>
          </Main>
        </Body>
        <DockShadow />
      </Window>
    </>
  );
}
